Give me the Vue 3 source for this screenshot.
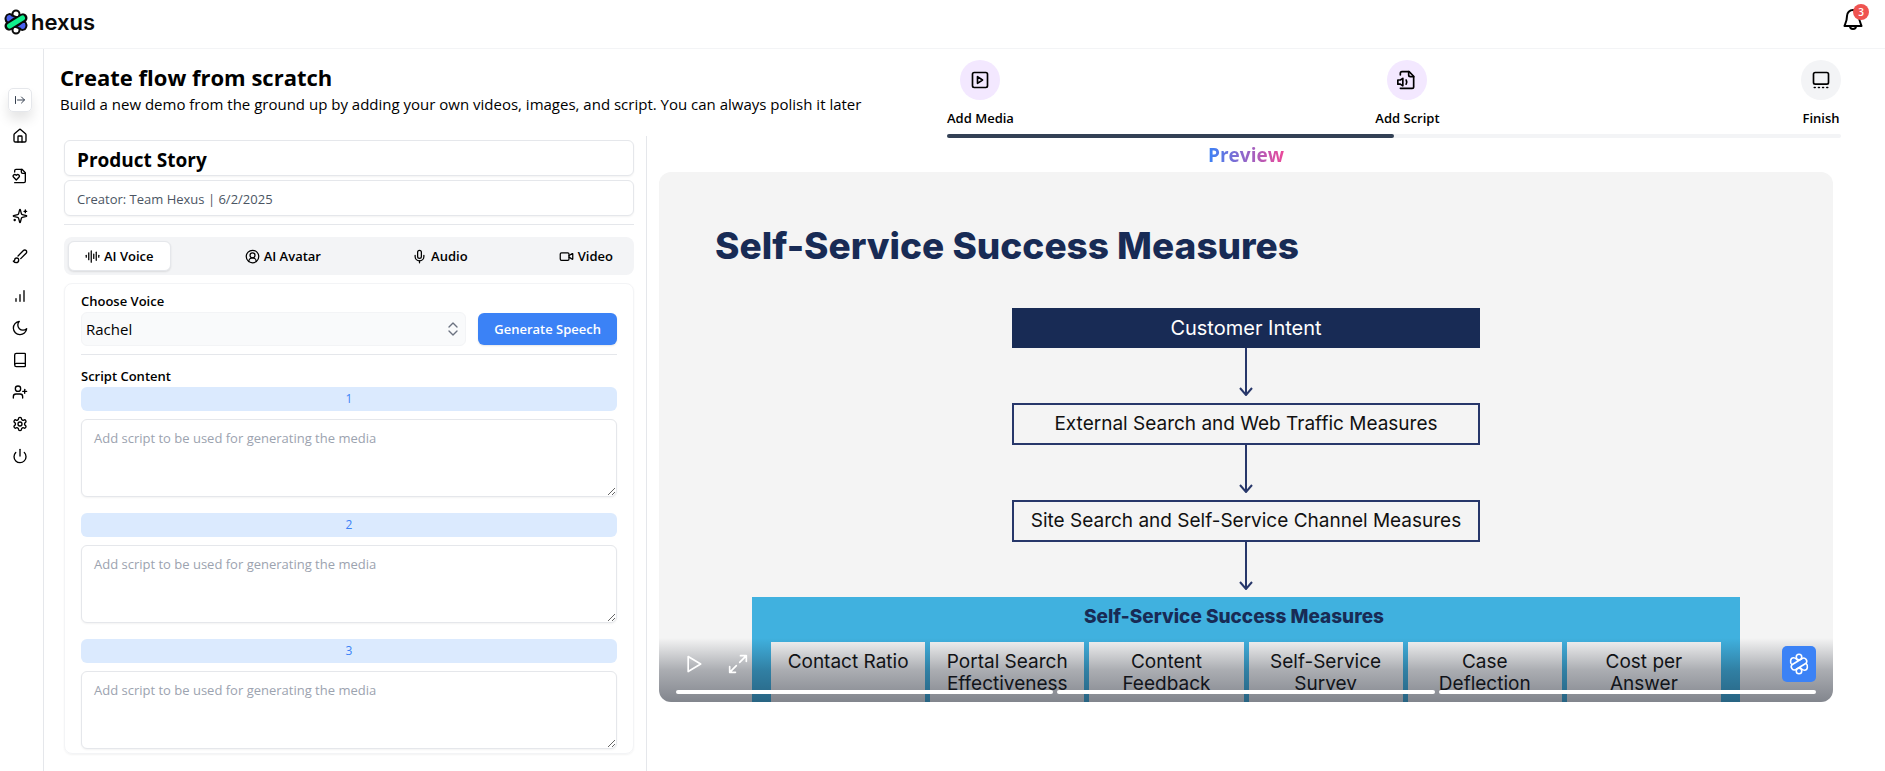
<script setup>
import { ref } from 'vue'

const title = ref('Product Story')
const creator = ref('Creator: Team Hexus | 6/2/2025')
const voice = ref('Rachel')
const activeTab = ref('AI Voice')
const scripts = ref(['', '', ''])

const navMain = [
  { label: 'Home', paths: ['M15 21v-8a1 1 0 0 0-1-1h-4a1 1 0 0 0-1 1v8', 'M3 10a2 2 0 0 1 .709-1.528l7-5.999a2 2 0 0 1 2.582 0l7 5.999A2 2 0 0 1 21 10v9a2 2 0 0 1-2 2H5a2 2 0 0 1-2-2z'] },
  { label: 'Favorites', paths: ['M4 22h14a2 2 0 0 0 2-2V7l-5-5H6a2 2 0 0 0-2 2v2', 'M14 2v4a2 2 0 0 0 2 2h4', 'M10.3 10.6a2.43 2.43 0 0 0-3.4 0l-.5.5-.5-.5a2.4 2.4 0 0 0-3.4 3.4L6.4 18l3.9-4a2.43 2.43 0 0 0 0-3.4z'] },
  { label: 'Create', paths: ['M9.937 15.5A2 2 0 0 0 8.5 14.063l-6.135-1.582a.5.5 0 0 1 0-.962L8.5 9.936A2 2 0 0 0 9.937 8.5l1.582-6.135a.5.5 0 0 1 .963 0L14.063 8.5A2 2 0 0 0 15.5 9.937l6.135 1.581a.5.5 0 0 1 0 .964L15.5 14.063a2 2 0 0 0-1.437 1.437l-1.582 6.135a.5.5 0 0 1-.963 0z', 'M20 3v4', 'M22 5h-4', 'M4 17v2', 'M5 18H3'] },
  { label: 'Brand', paths: ['m9.06 11.9 8.07-8.06a2.85 2.85 0 1 1 4.03 4.03l-8.06 8.08', 'M7.07 14.94c-1.66 0-3 1.35-3 3.02 0 1.33-2.5 1.52-2 2.02 1.08 1.1 2.49 2.02 4 2.02 2.2 0 4-1.8 4-4.04a3.01 3.01 0 0 0-3-3.02z'] },
  { label: 'Analytics', paths: ['M6 20v-4', 'M12 20V10', 'M18 20V4'] }
]
const navTools = [
  { label: 'Theme', paths: ['M11 2a7.500 7.500 0 0 0 11 11A10 10 0 1 1 11 2z'] },
  { label: 'Docs', paths: ['M4 19.5V4.5A2.5 2.5 0 0 1 6.5 2H19a1 1 0 0 1 1 1v18a1 1 0 0 1-1 1H6.5a2.5 2.5 0 0 1 0-5H20'] },
  { label: 'Invite', paths: ['M16 21v-2a4 4 0 0 0-4-4H6a4 4 0 0 0-4 4v2', 'M9 11a4 4 0 1 0 0-8 4 4 0 0 0 0 8z', 'M19 8v6', 'M22 11h-6'] },
  { label: 'Settings', paths: ['M12.22 2h-.44a2 2 0 0 0-2 2v.18a2 2 0 0 1-1 1.73l-.43.25a2 2 0 0 1-2 0l-.15-.08a2 2 0 0 0-2.73.73l-.22.38a2 2 0 0 0 .73 2.73l.15.1a2 2 0 0 1 1 1.72v.51a2 2 0 0 1-1 1.74l-.15.09a2 2 0 0 0-.73 2.73l.22.38a2 2 0 0 0 2.73.73l.15-.08a2 2 0 0 1 2 0l.43.25a2 2 0 0 1 1 1.73V20a2 2 0 0 0 2 2h.44a2 2 0 0 0 2-2v-.18a2 2 0 0 1 1-1.73l.43-.25a2 2 0 0 1 2 0l.15.08a2 2 0 0 0 2.73-.73l.22-.39a2 2 0 0 0-.73-2.73l-.15-.08a2 2 0 0 1-1-1.74v-.5a2 2 0 0 1 1-1.74l.15-.09a2 2 0 0 0 .73-2.73l-.22-.38a2 2 0 0 0-2.73-.73l-.15.08a2 2 0 0 1-2 0l-.43-.25a2 2 0 0 1-1-1.73V4a2 2 0 0 0-2-2z', 'M12 15a3 3 0 1 0 0-6 3 3 0 0 0 0 6z'] },
  { label: 'Log out', paths: ['M12 2v10', 'M18.4 6.6a9 9 0 1 1-12.77.04'] }
]
const tabs = [
  { label: 'AI Voice', paths: ['M2 10v3', 'M6 6v11', 'M10 3v18', 'M14 8v7', 'M18 5v13', 'M22 10v3'] },
  { label: 'AI Avatar', paths: ['M18 20a6 6 0 0 0-12 0', 'M12 14a4 4 0 1 0 0-8 4 4 0 0 0 0 8z', 'M12 22a10 10 0 1 0 0-20 10 10 0 0 0 0 20z'] },
  { label: 'Audio', paths: ['M12 2a3 3 0 0 0-3 3v7a3 3 0 0 0 6 0V5a3 3 0 0 0-3-3z', 'M19 10v2a7 7 0 0 1-14 0v-2', 'M12 19v3'] },
  { label: 'Video', paths: ['m16 13 5.223 3.482a.5.5 0 0 0 .777-.416V7.87a.5.5 0 0 0-.752-.432L16 10.5', 'M4 6h10a2 2 0 0 1 2 2v8a2 2 0 0 1-2 2H4a2 2 0 0 1-2-2V8a2 2 0 0 1 2-2z'] }
]
const steps = [
  { label: 'Add Media', done: true, paths: ['M5 3h14a2 2 0 0 1 2 2v14a2 2 0 0 1-2 2H5a2 2 0 0 1-2-2V5a2 2 0 0 1 2-2z', 'm9 8 6 4-6 4z'] },
  { label: 'Add Script', done: true, paths: ['M4 6V4a2 2 0 0 1 2-2h8.5L20 7.5V20a2 2 0 0 1-2 2H4', 'M14 2v4a2 2 0 0 0 2 2h4', 'M7 10v9l-3-2H1v-5h3z', 'M11 12a5 5 0 0 1 0 5'] },
  { label: 'Finish', done: false, paths: ['M5 3h14a2 2 0 0 1 2 2v10a2 2 0 0 1-2 2H5a2 2 0 0 1-2-2V5a2 2 0 0 1 2-2z', 'M4 21h1', 'M9 21h1', 'M14 21h1', 'M19 21h1'] }
]
const flow = ['Customer Intent', 'External Search and Web Traffic Measures', 'Site Search and Self-Service Channel Measures']
const measures = ['Contact Ratio', 'Portal Search Effectiveness', 'Content Feedback', 'Self-Service Survey', 'Case Deflection', 'Cost per Answer']
</script>

<template>
  <div class="app">
    <header class="topbar">
      <a href="#" class="brand" aria-label="hexus home">
        <svg class="logo" viewBox="0 0 24 26" fill="none" stroke="#0b0b0b" stroke-width="2">
          <circle cx="12" cy="5" r="3.500" fill="#fff" />
          <circle cx="12" cy="21" r="3.500" fill="#fff" />
          <circle cx="19" cy="9" r="3.500" fill="#fff" />
          <circle cx="5" cy="17" r="3.500" fill="#fff" />
          <path d="M2 7.500c1-3 5-3 6-1l4 1.500-8 6C1 12 1 10 2 7.500z" fill="#4a62f0" />
          <path d="M22 18.500c-1 3-5 3-6 1l-4-1.500 8-6c3 2 3 4 2 6.500z" fill="#4a62f0" />
          <path d="M5.500 17 18.500 9" stroke-width="8.500" stroke-linecap="round" />
          <path d="M5.500 17 18.500 9" stroke="#10f08c" stroke-width="5" stroke-linecap="round" />
        </svg>
        <span>hexus</span>
      </a>
      <button class="bell" type="button" aria-label="Notifications">
        <svg class="ico" viewBox="0 0 24 24"><path d="M6 8a6 6 0 0 1 12 0c0 6 2.500 9 2.500 10H3.500C3.500 17 6 14 6 8" /><path d="M9 18c0 4 6 4 6 0" /></svg>
        <span class="badge">3</span>
      </button>
    </header>

    <div class="body">
      <nav class="sidebar" aria-label="Main">
        <button class="collapse" type="button" aria-label="Expand sidebar">
          <svg class="ico" viewBox="0 0 24 24"><path d="M3 5v14" /><path d="M7 12h14" /><path d="m15 6 6 6-6 6" /></svg>
        </button>
        <div class="nav-main">
          <a v-for="n in navMain" :key="n.label" href="#" :aria-label="n.label">
            <svg class="ico" viewBox="0 0 24 24"><path v-for="p in n.paths" :key="p" :d="p" /></svg>
          </a>
        </div>
        <div class="nav-tools">
          <a v-for="n in navTools" :key="n.label" href="#" :aria-label="n.label">
            <svg class="ico" viewBox="0 0 24 24"><path v-for="p in n.paths" :key="p" :d="p" /></svg>
          </a>
        </div>
      </nav>

      <main>
        <section class="intro">
          <div class="heading">
            <h1>Create flow from scratch</h1>
            <p>Build a new demo from the ground up by adding your own videos, images, and script. You can always polish it later</p>
          </div>
          <div class="progress">
            <ol class="steps">
              <li v-for="s in steps" :key="s.label">
                <span class="dot" :class="{ done: s.done }">
                  <svg class="ico" viewBox="0 0 24 24"><path v-for="p in s.paths" :key="p" :d="p" /></svg>
                </span>
                <span>{{ s.label }}</span>
              </li>
            </ol>
            <div class="track"><div class="fill"></div></div>
          </div>
        </section>

        <div class="columns">
          <section class="editor">
            <input v-model="title" class="field title-field" aria-label="Title" />
            <input v-model="creator" class="field creator-field" aria-label="Creator" readonly />
            <hr />
            <div class="tabs" role="tablist">
              <button v-for="t in tabs" :key="t.label" type="button" role="tab" :aria-selected="activeTab === t.label" :class="{ active: activeTab === t.label }" @click="activeTab = t.label">
                <svg class="ico" viewBox="0 0 24 24"><path v-for="p in t.paths" :key="p" :d="p" /></svg>{{ t.label }}
              </button>
            </div>
            <div class="card">
              <label for="voice">Choose Voice</label>
              <div class="voice-row">
                <div class="select-wrap">
                  <select id="voice" v-model="voice"><option>Rachel</option></select>
                  <svg class="ico" viewBox="0 0 24 24"><path d="m6 9 6-6 6 6" /><path d="m6 15 6 6 6-6" /></svg>
                </div>
                <button class="generate" type="button">Generate Speech</button>
              </div>
              <hr />
              <h2>Script Content</h2>
              <div v-for="(s, i) in scripts" :key="i" class="script">
                <label :for="'script-' + i">{{ i + 1 }}</label>
                <textarea :id="'script-' + i" v-model="scripts[i]" placeholder="Add script to be used for generating the media"></textarea>
              </div>
            </div>
          </section>

          <section class="preview">
            <h2>Preview</h2>
            <div class="stage">
              <h3>Self-Service Success Measures</h3>
              <div class="flow">
                <template v-for="(f, i) in flow" :key="f">
                  <div class="node" :class="{ solid: i === 0 }">{{ f }}</div>
                  <svg class="arrow" viewBox="0 0 14 48"><path d="M7 0v47M1 40l6 7 6-7" /></svg>
                </template>
              </div>
              <div class="group">
                <h4>Self-Service Success Measures</h4>
                <div class="cells"><div v-for="m in measures" :key="m">{{ m }}</div></div>
              </div>
              <div class="controls">
                <div class="control-row">
                  <button type="button" aria-label="Play"><svg class="ico" viewBox="0 0 24 24"><path d="M5 3 20 12 5 21z" /></svg></button>
                  <button type="button" aria-label="Full screen"><svg class="ico" viewBox="0 0 24 24"><path d="M15 2h7v7M22 2l-8 8M9 22H2v-7M2 22l8-8" /></svg></button>
                  <a href="#" class="mark" aria-label="Made with hexus">
                    <svg viewBox="0 0 24 28" fill="none" stroke="#fff" stroke-width="2" stroke-linejoin="round">
                      <circle cx="12" cy="5" r="3.500" />
                      <circle cx="12" cy="23" r="3.500" />
                      <path d="M3 15 16 7a4 4 0 0 1 5 6L8 21a4 4 0 0 1-5-6z" />
                      <path d="M3 15C0 12 1 6 5 6c2 0 3 1 4 2l2 2" />
                      <path d="M21 13c3 3 2 9-2 9-2 0-3-1-4-2l-2-2" />
                    </svg>
                  </a>
                </div>
                <div class="segments"><span></span><span></span><span></span></div>
              </div>
            </div>
          </section>
        </div>
      </main>
    </div>
  </div>
</template>

<style>
body { margin: 0; background: #fff; }
</style>

<style scoped>
* { box-sizing: border-box; }
.app { min-height: 100vh; display: flex; flex-direction: column; font-family: "Open Sans", "Noto Sans", sans-serif; font-size: 14px; line-height: 20px; color: #000; }
h1, h2, h3, h4, p, ol { margin: 0; padding: 0; }
button, input, select, textarea { font: inherit; color: inherit; margin: 0; }
button { border: 0; background: none; padding: 0; }
a { color: inherit; text-decoration: none; }
hr { width: 100%; height: 1px; border: 0; margin: 0; background: #e5e7eb; }
.ico { display: block; width: 16px; height: 16px; fill: none; stroke: currentColor; stroke-width: 2; stroke-linecap: round; stroke-linejoin: round; flex: none; }
.topbar { height: 49px; border-bottom: 1px solid #f3f4f6; display: flex; justify-content: space-between; padding: 0 20px 0 4px; }
.brand { display: flex; align-items: center; gap: 3px; height: 44px; font: 600 22px/28px Inter, sans-serif; color: #0b0b0b; }
.logo { width: 24px; height: 26px; }
.bell { position: relative; width: 24px; height: 24px; margin-top: 8px; }
.bell .ico { width: 24px; height: 24px; }
.badge { position: absolute; left: 12px; top: -4px; width: 16px; height: 16px; border-radius: 50%; background: #ef5350; color: #fff; font-size: 10px; line-height: 16px; font-weight: 600; text-align: center; }
.body { flex: 1; display: flex; }
.sidebar { flex: 0 0 44px; border-right: 1px solid #e5e7eb; padding: 39px 4px 0 0; display: flex; flex-direction: column; align-items: center; }
.collapse { width: 24px; height: 24px; border: 1px solid #e5e7eb; border-radius: 5px; display: grid; place-items: center; box-shadow: 0 8px 12px #0000001a; color: #374151; }
.collapse .ico { width: 12px; height: 12px; }
.nav-main a, .nav-tools a { display: grid; place-items: center; width: 24px; }
.nav-main { margin-top: 4px; }
.nav-main a { height: 40px; }
.nav-tools a { height: 32px; }
.nav-tools { margin-top: -4px; }
main { flex: 1; min-width: 0; display: flex; flex-direction: column; }
.intro { display: grid; grid-template-columns: 887fr 894fr; padding: 11px 44px 0 16px; }
h1 { font-size: 22px; line-height: 34px; font-weight: 700; }
.heading p { font-size: 15px; line-height: 20px; white-space: nowrap; }
.steps { list-style: none; display: flex; justify-content: space-between; font-weight: 600; font-size: 13px; }
.steps li { display: flex; flex-direction: column; align-items: center; gap: 8px; line-height: 20px; }
.dot { width: 40px; height: 40px; border-radius: 50%; background: #f3f4f6; display: grid; place-items: center; }
.dot.done { background: #f3e8ff; }
.dot .ico { width: 20px; height: 20px; }
.track { margin-top: 6px; height: 4px; border-radius: 2px; background: #f3f4f6; }
.fill { width: 50%; height: 4px; border-radius: 2px; background: #334155; }
.columns { flex: 1; display: grid; grid-template-columns: 603fr 1238fr; margin-top: -2px; }
.editor { border-right: 1px solid #e5e7eb; padding: 4px 12px 18px 20px; display: flex; flex-direction: column; min-width: 0; }
.field { width: 100%; height: 36px; border: 1px solid #e5e7eb; border-radius: 6px; padding: 2px 12px 0; box-shadow: 0 1px 2px #0000000d; outline: 0; background: #fff; }
.title-field { padding-top: 4px; font-size: 19px; font-weight: 700; }
.creator-field { margin-top: 4px; font-size: 13px; color: #4b5563; }
.editor > hr { margin: 8px 0 12px; }
.tabs { height: 38px; border-radius: 8px; background: #f3f4f6; padding: 4px; display: flex; justify-content: space-between; }
.tabs button { height: 30px; padding: 0 16px; border-radius: 6px; display: flex; align-items: center; gap: 4px; font-size: 13px; font-weight: 600; border: 1px solid transparent; }
.tabs .ico { width: 15px; height: 15px; }
.tabs button.active { background: #fff; border-color: #e5e7eb; box-shadow: 0 1px 2px #0000001a; }
.card { margin-top: 8px; border: 1px solid #f3f4f6; border-radius: 8px; padding: 7px 16px 4px; box-shadow: 0 1px 2px #0000000d; }
.card > label, .card > h2 { display: block; padding-bottom: 1px; font-size: 13px; line-height: 20px; font-weight: 600; }
.voice-row { display: flex; align-items: center; gap: 12px; }
.select-wrap { position: relative; flex: 1; }
select { display: block; width: 100%; height: 34px; appearance: none; border: 1px solid #f3f4f6; border-radius: 6px; background: #f9fafb; padding: 0 4px; font-size: 15px; }
.select-wrap .ico { position: absolute; right: 5px; top: 9px; color: #6b7280; }
.generate { height: 32px; padding: 0 16px; border-radius: 6px; background: #3b82f6; color: #fff; font-size: 13px; font-weight: 600; box-shadow: 0 1px 2px #0000001a; }
.card hr { margin: 8px 0 11px; }
.script label { display: block; height: 24px; border-radius: 6px; background: #dbeafe; color: #3b82f6; font-size: 12px; line-height: 24px; text-align: center; }
.script textarea { display: block; width: 100%; height: 78px; margin-top: 8px; border: 1px solid #e5e7eb; border-radius: 6px; padding: 8px 12px; font-size: 13px; line-height: 20px; box-shadow: 0 1px 2px #0000000d; outline: 0; }
.script + .script { margin-top: 16px; }
textarea::placeholder { color: #9ca3af; }
.preview { padding: 5px 52px 0 12px; min-width: 0; display: flex; flex-direction: column; align-items: center; }
.preview > h2 { font-size: 19px; line-height: 28px; font-weight: 700; color: transparent; background: linear-gradient(90deg, #3b82f6, #ec4899); background-clip: text; }
.stage { position: relative; width: 100%; aspect-ratio: 1174 / 530; margin-top: 3px; border-radius: 12px; overflow: hidden; background: #f4f4f4; font-family: Inter, sans-serif; color: #111; display: flex; flex-direction: column; align-items: center; }
h3 { align-self: flex-start; margin: 50px 0 0 56px; font-size: 37px; line-height: 48px; font-weight: 800; color: #182b55; }
.flow { margin-top: 38px; width: 468px; display: flex; flex-direction: column; align-items: center; font-size: 19px; }
.node { width: 100%; height: 42px; border: 2px solid #27376a; display: grid; place-items: center; white-space: nowrap; }
.node.solid { height: 40px; background: #182b55; border-color: #182b55; color: #fff; font-size: 20px; }
.arrow { width: 14px; height: 48px; margin-bottom: 7px; fill: none; stroke: #27376a; stroke-width: 2; }
.group { width: 988px; max-width: 90%; flex: 1; background: #40b1df; padding: 8px 19px 0; display: flex; flex-direction: column; }
h4 { padding-right: 24px; font-size: 19px; line-height: 24px; font-weight: 800; text-align: center; color: #182b55; }
.cells { margin-top: 13px; flex: 1; display: grid; grid-template-columns: repeat(6, 1fr); gap: 5px; }
.cells div { background: #f4f4f4; padding: 9px 12px 0; text-align: center; font-size: 19px; line-height: 22px; }
.controls { position: absolute; left: 0; right: 0; bottom: 0; height: 64px; padding: 8px 17px; background: linear-gradient(#11182700, #11182752 50%, #11182780); display: flex; flex-direction: column; justify-content: space-between; }
.control-row { display: flex; align-items: center; gap: 24px; color: #fff; padding-left: 8px; }
.control-row .ico { width: 20px; height: 20px; }
.mark { margin-left: auto; width: 34px; height: 36px; border-radius: 5px; background: #3b82f6; display: grid; place-items: center; }
.mark svg { width: 20px; height: 22px; }
.segments { display: flex; gap: 4px; }
.segments span { flex: 1; height: 4px; border-radius: 2px; background: #fff; }
</style>
